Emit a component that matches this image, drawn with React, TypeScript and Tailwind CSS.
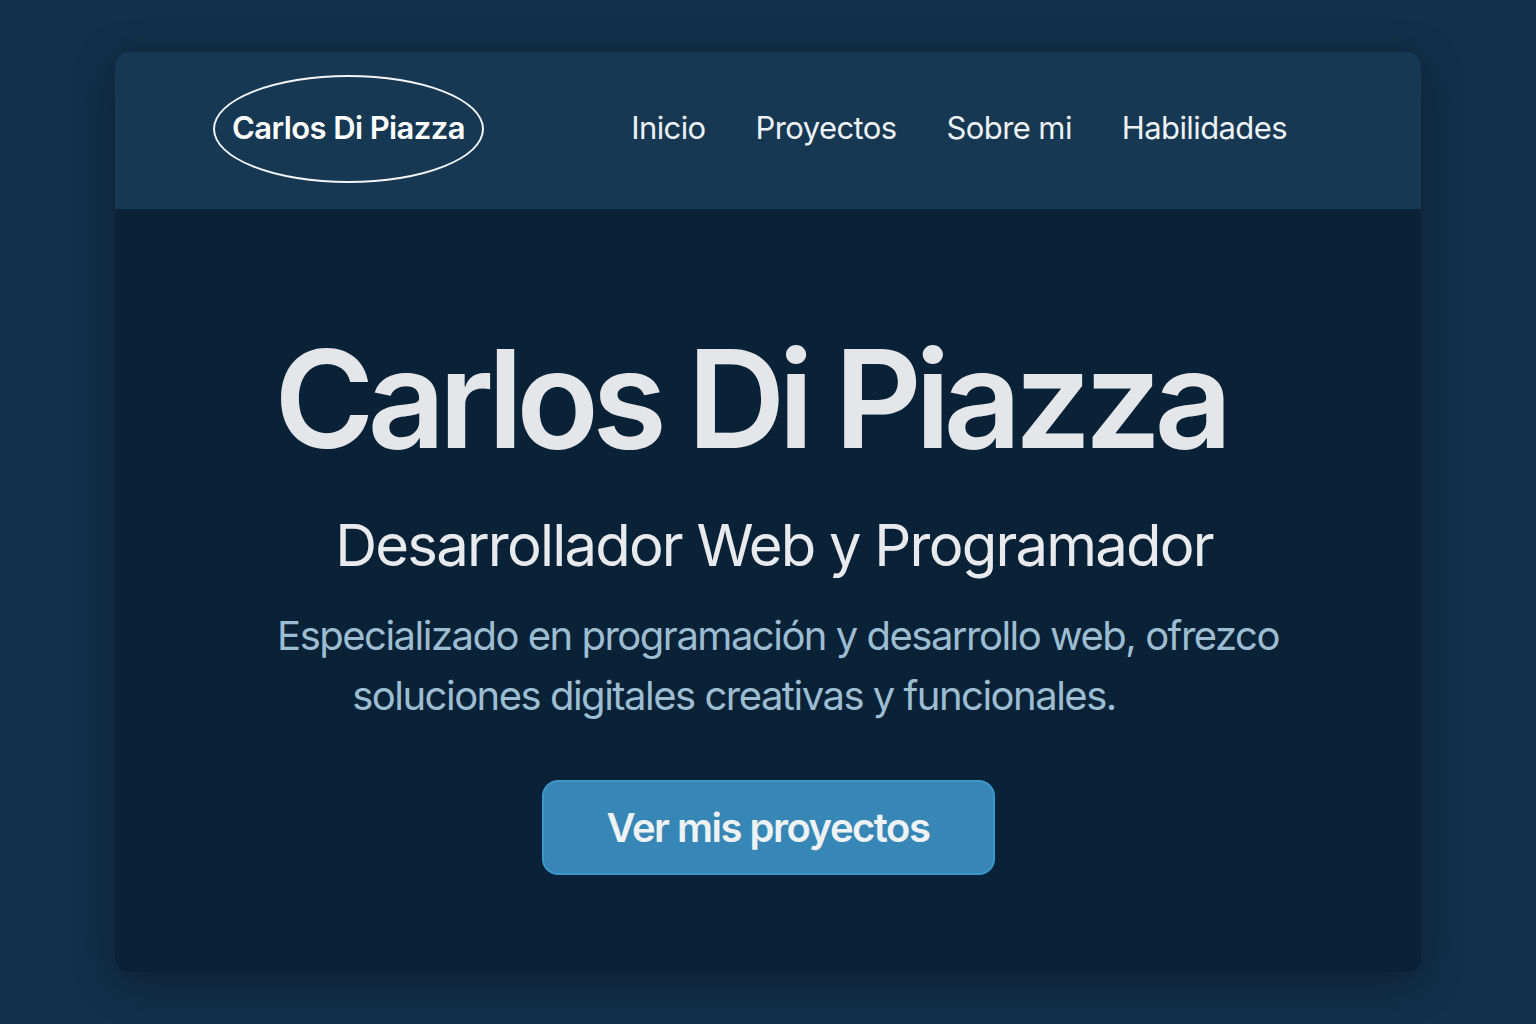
import React from "react";

const navItems = ["Inicio", "Proyectos", "Sobre mi", "Habilidades"];

export default function App() {
  return (
    <div
      className="min-h-[1024px] w-full bg-[#12304a] pt-[52px]"
      style={{ fontFamily: "Inter, 'Noto Sans', sans-serif" }}
    >
      <div className="mx-auto flex h-[920px] w-[1306px] flex-col overflow-hidden rounded-[14px] bg-[#0a2238] shadow-[0_10px_40px_rgba(0,0,0,0.35)]">
        {/* Header */}
        <header className="flex h-[157px] shrink-0 items-center bg-[#163852] pb-[4px] pl-[98px] pr-[134px]">
          <div className="flex h-[108px] w-[271px] items-center justify-center rounded-[50%] border-2 border-[#f2f4f6]">
            <span className="text-[31px] font-semibold tracking-[-0.6px] text-white">Carlos Di Piazza</span>
          </div>
          <nav className="ml-auto flex items-center gap-[50px]">
            {navItems.map((item) => (
              <a key={item} href="#" className="text-[31px] font-normal tracking-[-0.6px] text-[#eef2f5]">
                {item}
              </a>
            ))}
          </nav>
        </header>

        {/* Hero */}
        <main className="flex flex-1 flex-col items-center pt-[122px]">
          <h1 className="pr-[36px] text-[136px] font-semibold leading-none tracking-[-7px] text-[#e4e6e9]">
            Carlos Di Piazza
          </h1>
          <h2 className="mt-[49px] pl-[12px] text-[58px] font-normal leading-none tracking-[-1.8px] text-[#e8eaed]">
            Desarrollador Web y Programador
          </h2>
          <p className="mt-[32px] pl-[20px] text-center text-[40px] leading-[60px] tracking-[-1.5px] text-[#9dbdd2]">
            <span className="block">Especializado en programación y desarrollo web, ofrezco</span>
            <span className="block pr-[88px]">soluciones digitales creativas y funcionales.</span>
          </p>
          <a
            href="#"
            className="mt-[54px] flex h-[95px] w-[453px] items-center justify-center rounded-[16px] border-2 border-[#3d97cc] bg-[#3687b5] text-[40px] font-semibold tracking-[-1.5px] text-[#eef2f5]"
          >
            Ver mis proyectos
          </a>
        </main>
      </div>
    </div>
  );
}
